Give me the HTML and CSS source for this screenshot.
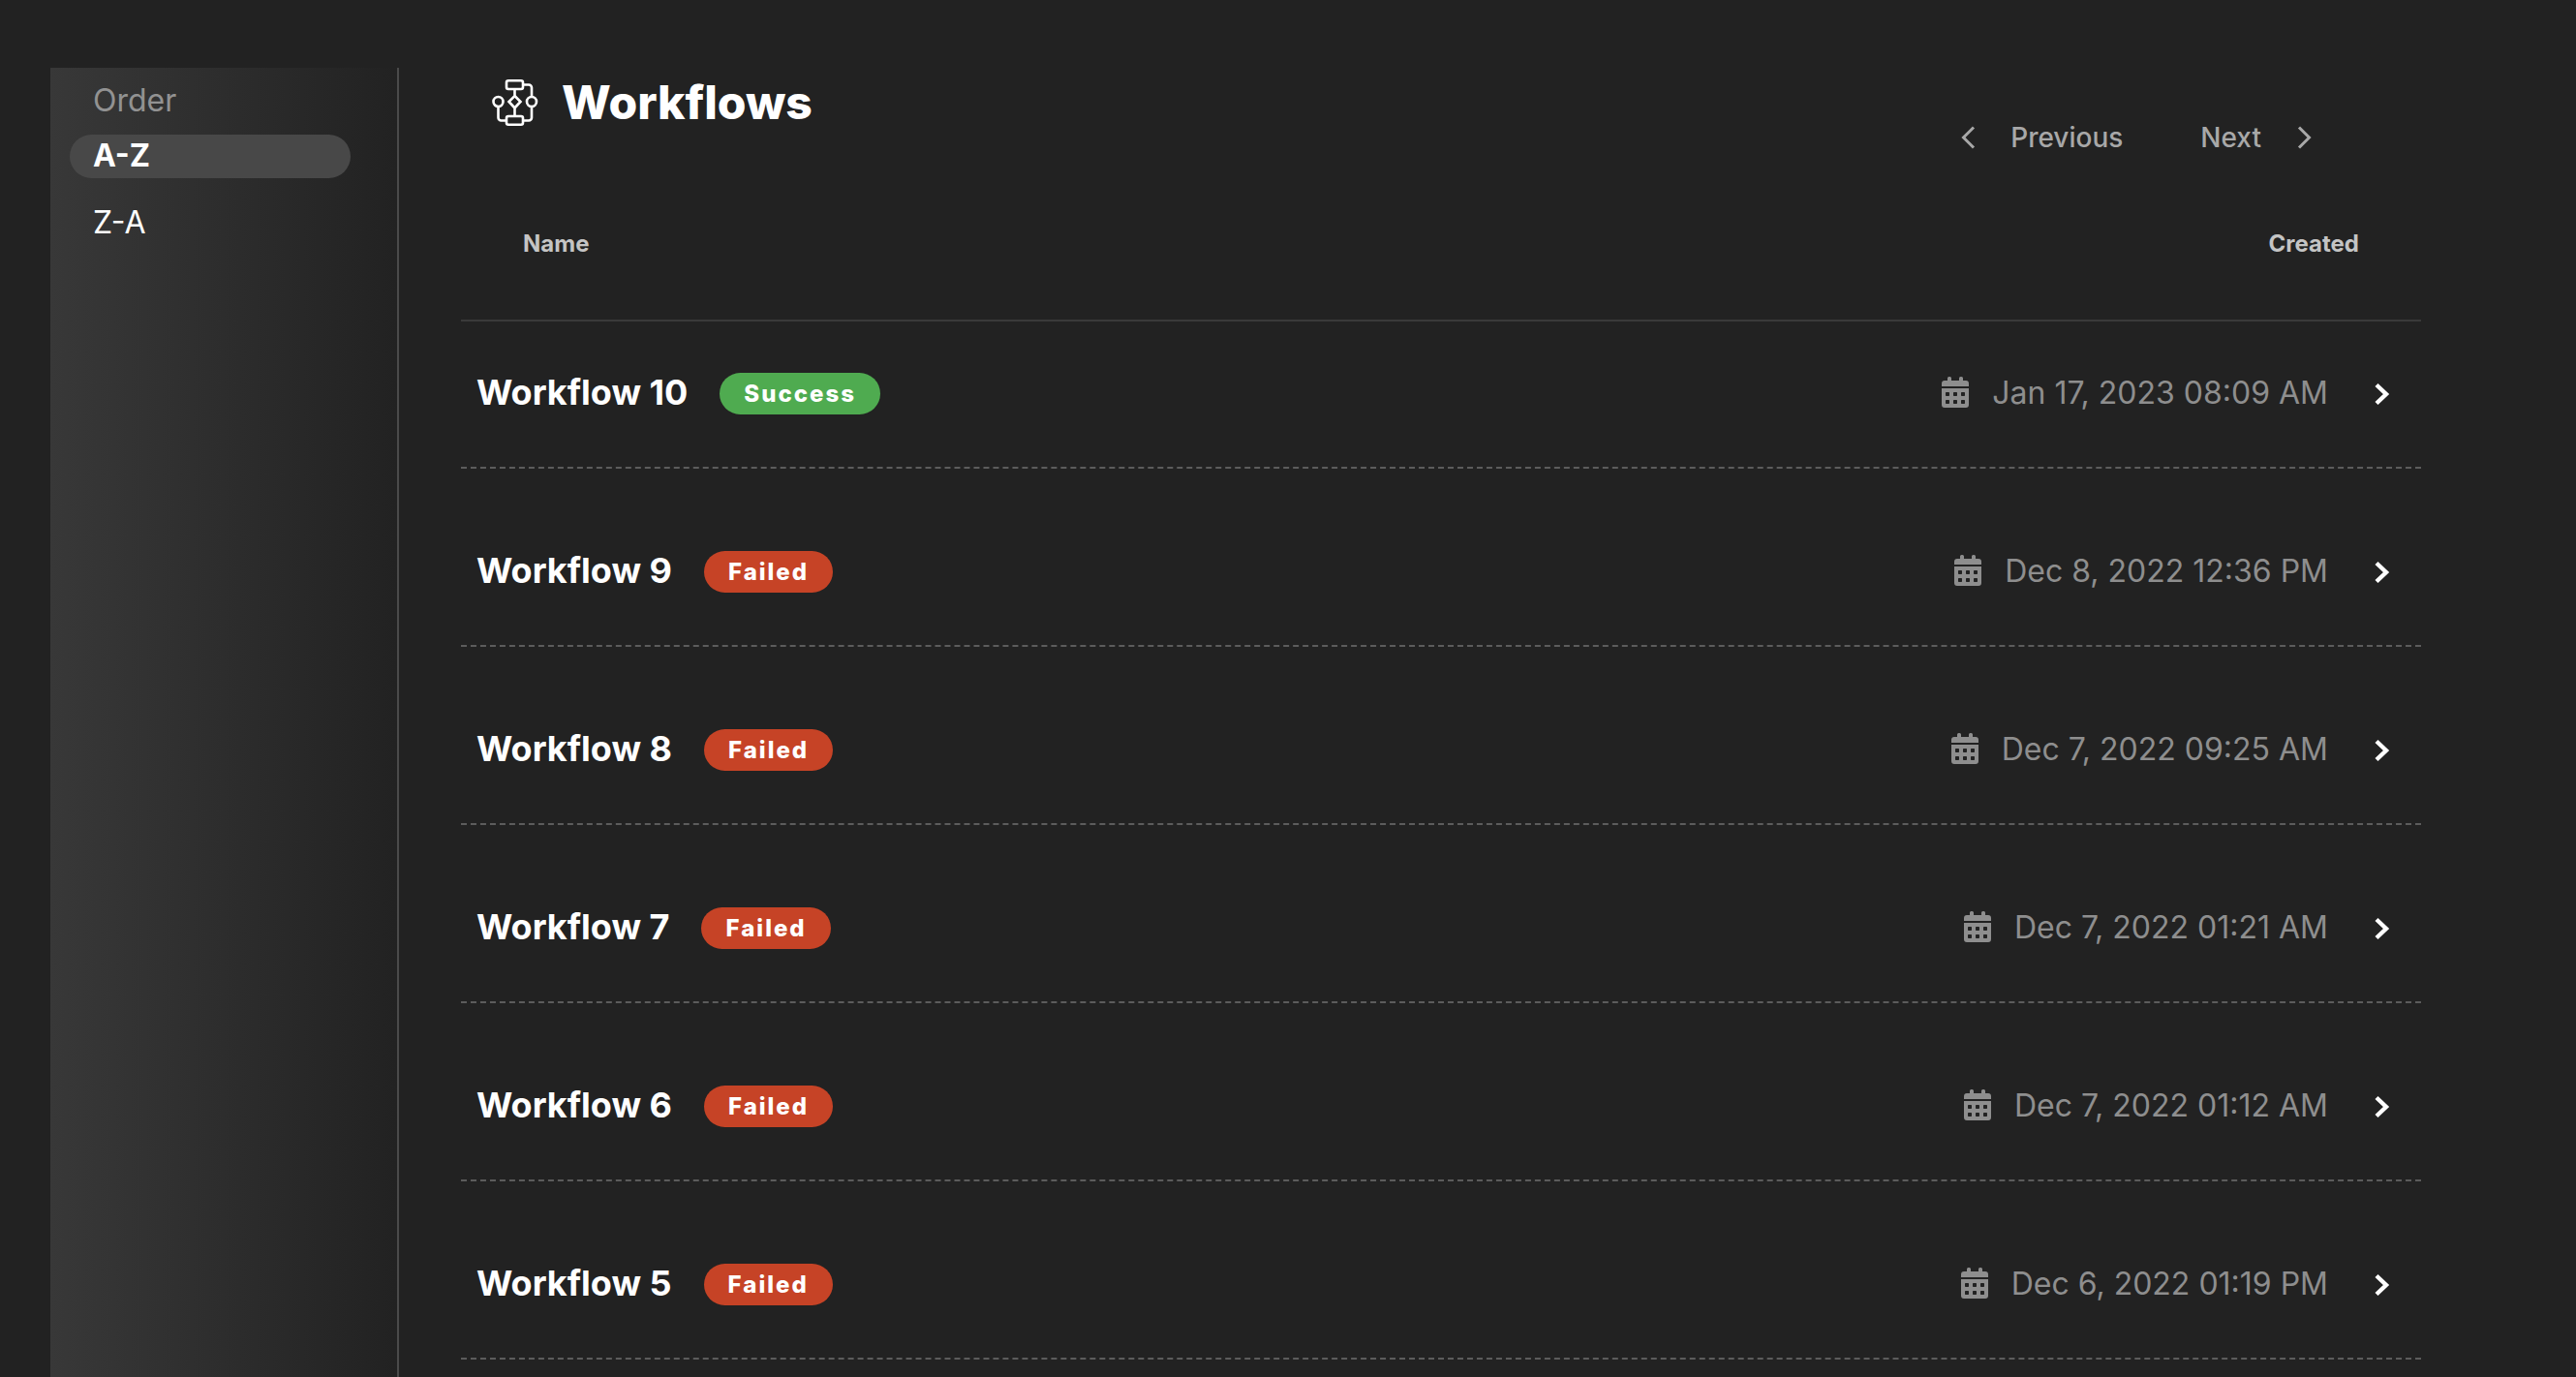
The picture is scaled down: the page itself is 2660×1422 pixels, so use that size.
FILE: index.html
```html
<!DOCTYPE html>
<html lang="en">
<head>
<meta charset="utf-8">
<meta name="viewport" content="width=device-width, initial-scale=1">
<title>Workflows</title>
<link rel="stylesheet" href="styles.css">
</head>
<body>
<svg class="sprite" aria-hidden="true">
  <symbol id="calendar" viewBox="0 0 28 32">
    <path fill-rule="evenodd" d="M0 10V7a3 3 0 0 1 3-3h3V1.500a1.500 1.500 0 0 1 1.500-1.500h1a1.500 1.500 0 0 1 1.500 1.500V4h8V1.500a1.500 1.500 0 0 1 1.500-1.500h1a1.500 1.500 0 0 1 1.500 1.500V4h3a3 3 0 0 1 3 3v3zM0 12h28v17a3 3 0 0 1-3 3H3a3 3 0 0 1-3-3zM4.700 16a.7.7 0 0 0-.7.7v2.600a.7.7 0 0 0 .7.7h2.600a.7.7 0 0 0 .7-.7v-2.600a.7.7 0 0 0-.7-.7zm8 0a.7.7 0 0 0-.7.7v2.600a.7.7 0 0 0 .7.7h2.600a.7.7 0 0 0 .7-.7v-2.600a.7.7 0 0 0-.7-.7zm8 0a.7.7 0 0 0-.7.7v2.600a.7.7 0 0 0 .7.7h2.600a.7.7 0 0 0 .7-.7v-2.600a.7.7 0 0 0-.7-.7zM4.700 24a.7.7 0 0 0-.7.7v2.600a.7.7 0 0 0 .7.7h2.600a.7.7 0 0 0 .7-.7v-2.600a.7.7 0 0 0-.7-.7zm8 0a.7.7 0 0 0-.7.7v2.600a.7.7 0 0 0 .7.7h2.600a.7.7 0 0 0 .7-.7v-2.600a.7.7 0 0 0-.7-.7zm8 0a.7.7 0 0 0-.7.7v2.600a.7.7 0 0 0 .7.7h2.600a.7.7 0 0 0 .7-.7v-2.600a.7.7 0 0 0-.7-.7z"/>
  </symbol>
  <symbol id="open" viewBox="0 0 16 24">
    <path d="M2 2.500 12 12 2 21.500" fill="none" stroke="currentColor" stroke-width="4.400"/>
  </symbol>
</svg>
<div class="layout">
  <aside class="sidebar">
    <h2 class="sidebar-title">Order</h2>
    <button class="order active" type="button" aria-pressed="true">A-Z</button>
    <button class="order" type="button" aria-pressed="false">Z-A</button>
  </aside>
  <main class="main">
    <header class="header">
      <div class="heading">
        <svg class="logo" viewBox="0 0 48 48" stroke-width="2.600" aria-hidden="true">
          <rect x="15" y="1.300" width="17" height="8.700" rx="2"/>
          <rect x="15" y="38" width="17" height="8.700" rx="2"/>
          <path d="M23.500 10v7M23.500 30v8M23.500 17l6 6-6 6.500-6-6.500z"/>
          <circle cx="6.500" cy="23" r="5"/>
          <circle cx="41" cy="23" r="5"/>
          <path d="M32 5.500h6a3 3 0 0 1 3 3V18M41 28v11.500a3 3 0 0 1-3 3h-6M6.500 28v11.500a3 3 0 0 0 3 3H15"/>
        </svg>
        <h1 class="title">Workflows</h1>
      </div>
      <nav class="pager" aria-label="Pages">
        <button class="page-button" type="button"><svg class="arrow" viewBox="0 0 16 24" aria-hidden="true"><path d="M14 1.500 3.500 12 14 22.500"/></svg>Previous</button>
        <button class="page-button" type="button">Next<svg class="arrow" viewBox="0 0 16 24" aria-hidden="true"><path d="M3 1.500 13.500 12 3 22.500"/></svg></button>
      </nav>
    </header>
    <table class="workflows">
      <thead>
        <tr><th scope="col">Name</th><th scope="col">Created</th></tr>
      </thead>
      <tbody>
        <tr>
          <td><div class="name">Workflow 10<span class="badge success">Success</span></div></td>
          <td><div class="date"><svg class="calendar" aria-hidden="true"><use href="#calendar"/></svg><time>Jan 17, 2023 08:09 AM</time><a class="open" href="#w10" aria-label="Open Workflow 10"><svg class="chevron"><use href="#open"/></svg></a></div></td>
        </tr>
        <tr>
          <td><div class="name">Workflow 9<span class="badge failed">Failed</span></div></td>
          <td><div class="date"><svg class="calendar" aria-hidden="true"><use href="#calendar"/></svg><time>Dec 8, 2022 12:36 PM</time><a class="open" href="#w9" aria-label="Open Workflow 9"><svg class="chevron"><use href="#open"/></svg></a></div></td>
        </tr>
        <tr>
          <td><div class="name">Workflow 8<span class="badge failed">Failed</span></div></td>
          <td><div class="date"><svg class="calendar" aria-hidden="true"><use href="#calendar"/></svg><time>Dec 7, 2022 09:25 AM</time><a class="open" href="#w8" aria-label="Open Workflow 8"><svg class="chevron"><use href="#open"/></svg></a></div></td>
        </tr>
        <tr>
          <td><div class="name">Workflow 7<span class="badge failed">Failed</span></div></td>
          <td><div class="date"><svg class="calendar" aria-hidden="true"><use href="#calendar"/></svg><time>Dec 7, 2022 01:21 AM</time><a class="open" href="#w7" aria-label="Open Workflow 7"><svg class="chevron"><use href="#open"/></svg></a></div></td>
        </tr>
        <tr>
          <td><div class="name">Workflow 6<span class="badge failed">Failed</span></div></td>
          <td><div class="date"><svg class="calendar" aria-hidden="true"><use href="#calendar"/></svg><time>Dec 7, 2022 01:12 AM</time><a class="open" href="#w6" aria-label="Open Workflow 6"><svg class="chevron"><use href="#open"/></svg></a></div></td>
        </tr>
        <tr>
          <td><div class="name">Workflow 5<span class="badge failed">Failed</span></div></td>
          <td><div class="date"><svg class="calendar" aria-hidden="true"><use href="#calendar"/></svg><time>Dec 6, 2022 01:19 PM</time><a class="open" href="#w5" aria-label="Open Workflow 5"><svg class="chevron"><use href="#open"/></svg></a></div></td>
        </tr>
      </tbody>
    </table>
  </main>
</div>
</body>
</html>
```

FILE: styles.css
```css
* { box-sizing: border-box; }

body {
  margin: 0;
  background: #222;
  color: #fff;
  font-family: Inter, "Liberation Sans", sans-serif;
  font-size: 32px;
}

button {
  margin: 0;
  border: 0;
  background: none;
  color: inherit;
  font: inherit;
  cursor: pointer;
}

.sprite { display: none; }

.layout {
  display: flex;
  min-height: 100vh;
  padding: 70px 160px 0 52px;
}

.sidebar {
  display: flex;
  flex: 0 0 360px;
  flex-direction: column;
  padding: 12px 48px 0 20px;
  border-right: 2px solid #4a4a4a;
  background: linear-gradient(to right, #383838, #222);
}

.sidebar-title {
  margin: 0 0 14px;
  padding: 0 24px;
  color: #929292;
  font-size: 32px;
  font-weight: 400;
  line-height: 43px;
}

.order {
  margin-bottom: 24px;
  padding: 0 24px 2px;
  border-radius: 24px;
  line-height: 43px;
  text-align: left;
}

.order.active {
  background: #484848;
  font-weight: 700;
}

.main {
  flex: 1;
  min-width: 0;
  padding-left: 64px;
}

.header {
  display: flex;
  justify-content: space-between;
  padding: 0 113px 0 32px;
}

.heading {
  display: flex;
  align-items: center;
  gap: 24px;
  height: 72px;
}

.logo {
  width: 48px;
  height: 48px;
  fill: none;
  stroke: #fff;
}

.title {
  margin: 0;
  font-size: 48px;
  font-weight: 800;
  line-height: 72px;
}

.pager {
  display: flex;
  gap: 80px;
  padding-top: 52px;
  color: #a8a8a8;
}

.page-button {
  display: flex;
  align-items: center;
  gap: 36px;
  padding: 0;
  font-size: 28px;
  font-weight: 500;
  line-height: 40px;
}

.arrow {
  width: 16px;
  height: 24px;
  fill: none;
  stroke: currentColor;
  stroke-width: 3;
}

.workflows,
.workflows thead,
.workflows tbody {
  display: block;
}

.workflows tr {
  display: flex;
  justify-content: space-between;
}

.workflows thead tr {
  padding: 74px 64px 62px;
  border-bottom: 2px solid #3a3a3a;
}

.workflows th {
  padding: 0;
  color: #c4c4c4;
  font-size: 24px;
  font-weight: 700;
  line-height: 32px;
}

.workflows tbody tr {
  padding: 85px 0 54px;
  border-bottom: 2px dashed #5c5c5c;
}

.workflows tbody tr:first-child { padding-top: 53px; }

.workflows td { padding: 0; }

.name,
.date {
  display: flex;
  height: 43px;
}

.name {
  align-items: flex-start;
  gap: 33px;
  padding-left: 16px;
  font-size: 36px;
  font-weight: 700;
  line-height: 41px;
}

.badge {
  padding: 0 25px;
  border-radius: 24px;
  font-size: 24px;
  font-weight: 800;
  letter-spacing: 2px;
  line-height: 43px;
}

.success { background: #4fab50; }
.failed { background: #c64326; }

.date {
  align-items: center;
  gap: 24px;
  padding: 0 32px 3px 0;
  color: #8e8e8e;
  font-weight: 400;
}

.calendar {
  width: 28px;
  height: 32px;
  fill: currentColor;
}

.open {
  display: flex;
  padding: 4px 0 0 24px;
  color: #fff;
}

.chevron {
  width: 16px;
  height: 24px;
}
```
